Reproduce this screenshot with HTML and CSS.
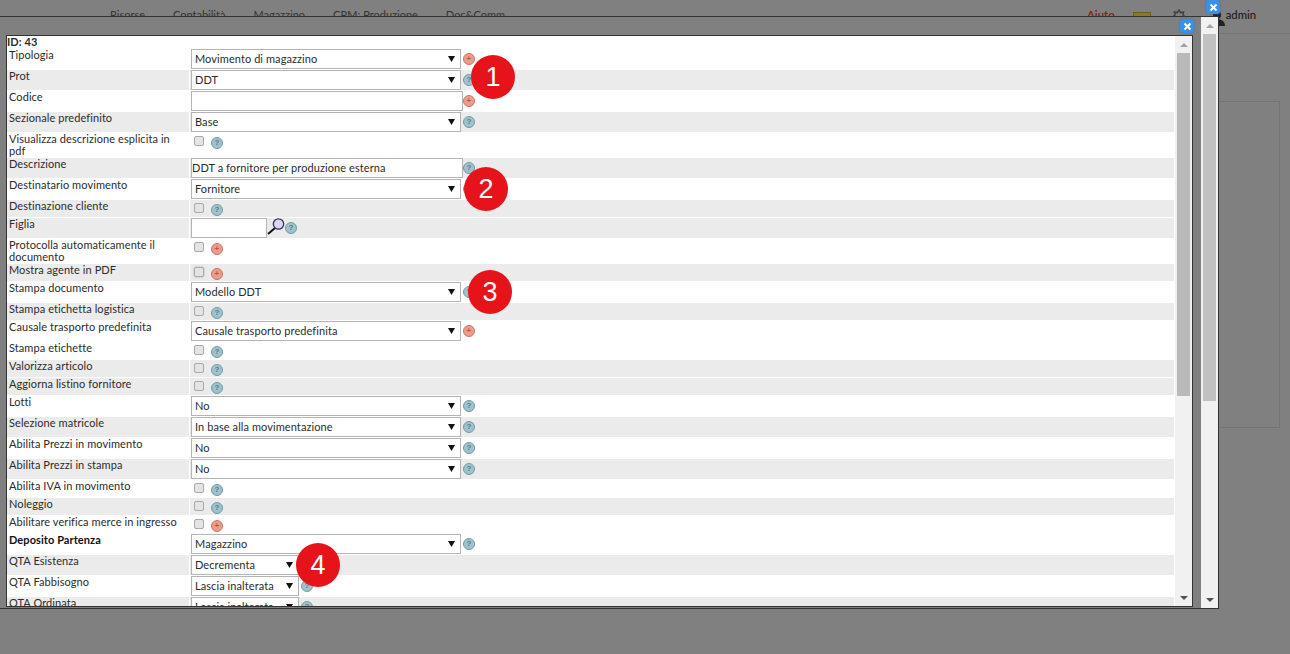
FILE: index.html
```html
<!DOCTYPE html>
<html>
<head>
	<title>Tipologia documento</title>
	<meta charset="UTF-8">
	<link rel="stylesheet" href="styles.css">
</head>
<body>
	<div class="topbar">
		<nav class="nav">
			<a>Risorse</a>
			<a>Contabilità</a>
			<a>Magazzino</a>
			<a>CRM; Produzione</a>
			<a>Doc&amp;Comm</a>
		</nav>
		<div class="tools">
			<a class="help-link">Aiuto</a>
			<span class="mail"></span>
			<svg class="gear" width="16" height="16" viewBox="0 0 16 16"><path d="M8 1l1.600 2.600 3-.7-.7 3L14.500 8l-2.600 2 .7 3-3-.7L8 15l-1.600-2.700-3 .7.7-3L1.500 8l2.600-2.100-.7-3 3 .7z" fill="none" stroke="#444" stroke-width="1.500"/></svg>
			<svg class="user" width="15" height="16" viewBox="0 0 15 16"><circle cx="7" cy="5" r="4" fill="#222"/><path d="M0 16c0-5 3-7 7-7s8 2 8 7z" fill="#222"/></svg>
			<span class="admin">admin</span>
		</div>
	</div>
	<div class="panel"></div>

	<div class="win-outer">
		<span class="close close-outer"><svg width="9" height="9" viewBox="0 0 9 9"><path d="M1.500 1.500l6 6M7.500 1.500l-6 6" stroke="#fff" stroke-width="2"/></svg></span>
		<div class="sbar">
			<span class="sbar-btn"><i class="arrow-up"></i></span>
			<span class="sbar-thumb thumb-outer"></span>
			<span class="sbar-rest"></span>
			<span class="sbar-btn"><i class="arrow-down"></i></span>
		</div>

		<div class="win-inner">
			<div class="form">
				<div class="id-line">ID: 43</div>

				<div class="row">
					<label>Tipologia</label>
					<div class="field"><select class="sel"><option>Movimento di magazzino</option></select><span class="mark plus">+</span></div>
				</div>
				<div class="row alt">
					<label>Prot</label>
					<div class="field"><select class="sel"><option>DDT</option></select><span class="mark tip">?</span></div>
				</div>
				<div class="row">
					<label>Codice</label>
					<div class="field"><input class="txt" type="text"><span class="mark plus">+</span></div>
				</div>
				<div class="row alt">
					<label>Sezionale predefinito</label>
					<div class="field"><select class="sel"><option>Base</option></select><span class="mark tip">?</span></div>
				</div>
				<div class="row row-two">
					<label>Visualizza descrizione esplicita in pdf</label>
					<div class="field check"><input type="checkbox"><span class="mark tip">?</span></div>
				</div>
				<div class="row alt">
					<label>Descrizione</label>
					<div class="field"><input class="txt" type="text" value="DDT a fornitore per produzione esterna"><span class="mark tip">?</span></div>
				</div>
				<div class="row">
					<label>Destinatario movimento</label>
					<div class="field"><select class="sel"><option>Fornitore</option></select><span class="mark tip">?</span></div>
				</div>
				<div class="row row-chk alt">
					<label>Destinazione cliente</label>
					<div class="field check"><input type="checkbox"><span class="mark tip">?</span></div>
				</div>
				<div class="row alt">
					<label>Figlia</label>
					<div class="field">
						<input class="txt txt-short" type="text">
						<svg class="lens" width="20" height="17" viewBox="0 0 20 17"><path d="M1 16l7-6" stroke="#111" stroke-width="2"/><circle cx="11.500" cy="6" r="5.200" fill="#d9d6ee" stroke="#34345a" stroke-width="1.300"/></svg>
						<span class="mark tip">?</span>
					</div>
				</div>
				<div class="row row-two">
					<label>Protocolla automaticamente il documento</label>
					<div class="field check"><input type="checkbox"><span class="mark plus">+</span></div>
				</div>
				<div class="row row-chk alt">
					<label>Mostra agente in PDF</label>
					<div class="field check"><input class="focused" type="checkbox"><span class="mark plus">+</span></div>
				</div>
				<div class="row">
					<label>Stampa documento</label>
					<div class="field"><select class="sel"><option>Modello DDT</option></select><span class="mark tip">?</span></div>
				</div>
				<div class="row row-chk alt">
					<label>Stampa etichetta logistica</label>
					<div class="field check"><input type="checkbox"><span class="mark tip">?</span></div>
				</div>
				<div class="row">
					<label>Causale trasporto predefinita</label>
					<div class="field"><select class="sel"><option>Causale trasporto predefinita</option></select><span class="mark plus">+</span></div>
				</div>
				<div class="row row-chk">
					<label>Stampa etichette</label>
					<div class="field check"><input type="checkbox"><span class="mark tip">?</span></div>
				</div>
				<div class="row row-chk alt">
					<label>Valorizza articolo</label>
					<div class="field check"><input type="checkbox"><span class="mark tip">?</span></div>
				</div>
				<div class="row row-chk alt">
					<label>Aggiorna listino fornitore</label>
					<div class="field check"><input type="checkbox"><span class="mark tip">?</span></div>
				</div>
				<div class="row">
					<label>Lotti</label>
					<div class="field"><select class="sel"><option>No</option></select><span class="mark tip">?</span></div>
				</div>
				<div class="row alt">
					<label>Selezione matricole</label>
					<div class="field"><select class="sel"><option>In base alla movimentazione</option></select><span class="mark tip">?</span></div>
				</div>
				<div class="row">
					<label>Abilita Prezzi in movimento</label>
					<div class="field"><select class="sel"><option>No</option></select><span class="mark tip">?</span></div>
				</div>
				<div class="row alt">
					<label>Abilita Prezzi in stampa</label>
					<div class="field"><select class="sel"><option>No</option></select><span class="mark tip">?</span></div>
				</div>
				<div class="row row-chk">
					<label>Abilita IVA in movimento</label>
					<div class="field check"><input type="checkbox"><span class="mark tip">?</span></div>
				</div>
				<div class="row row-chk alt">
					<label>Noleggio</label>
					<div class="field check"><input type="checkbox"><span class="mark tip">?</span></div>
				</div>
				<div class="row row-chk">
					<label>Abilitare verifica merce in ingresso</label>
					<div class="field check"><input type="checkbox"><span class="mark plus">+</span></div>
				</div>
				<div class="row">
					<label class="strong">Deposito Partenza</label>
					<div class="field"><select class="sel"><option>Magazzino</option></select><span class="mark tip">?</span></div>
				</div>
				<div class="row alt">
					<label>QTA Esistenza</label>
					<div class="field"><select class="sel sel-short"><option>Decrementa</option></select><span class="mark tip">?</span></div>
				</div>
				<div class="row">
					<label>QTA Fabbisogno</label>
					<div class="field"><select class="sel sel-short"><option>Lascia inalterata</option></select><span class="mark tip">?</span></div>
				</div>
				<div class="row alt">
					<label>QTA Ordinata</label>
					<div class="field"><select class="sel sel-short"><option>Lascia inalterata</option></select><span class="mark tip">?</span></div>
				</div>
			</div>
			<div class="sbar">
				<span class="sbar-btn"><i class="arrow-up"></i></span>
				<span class="sbar-thumb thumb-inner"></span>
				<span class="sbar-rest"></span>
				<span class="sbar-btn"><i class="arrow-down"></i></span>
			</div>
		</div>
		<span class="close close-inner"><svg width="9" height="9" viewBox="0 0 9 9"><path d="M1.500 1.500l6 6M7.500 1.500l-6 6" stroke="#fff" stroke-width="2"/></svg></span>
	</div>

	<span class="badge badge-1">1</span>
	<span class="badge badge-2">2</span>
	<span class="badge badge-3">3</span>
	<span class="badge badge-4">4</span>
</body>
</html>
```

FILE: styles.css
```css
* {
	box-sizing: border-box;
}

html, body {
	margin: 0;
	height: 100%;
}

body {
	height: 654px;
	overflow: hidden;
	background: #808080;
	font-family: "Lato", "Open Sans", sans-serif;
	font-size: 11px;
	color: #2b2b2b;
}

/* page behind the modal */
.topbar {
	display: flex;
	justify-content: space-between;
	height: 34px;
	padding: 7px 34px 0 110px;
	border-bottom: 1px solid #757575;
	color: #333;
}

.nav {
	display: flex;
	gap: 28px;
	line-height: 15px;
}

.tools {
	display: flex;
	align-items: flex-start;
	font-size: 11.3px;
	line-height: 15px;
}

.help-link {
	font-weight: bold;
	color: #8a1f1f;
	margin-right: 18px;
}

.mail {
	width: 18px;
	height: 7px;
	margin: 5px 20px 0 0;
	background: #8d7a1f;
	border: 1px solid #6b5f1c;
}

.gear {
	margin: 2px 23px 0 0;
}

.user {
	margin: 3px 1px 0 0;
}

.admin {
	color: #111;
}

.panel {
	height: 327px;
	margin: 67px 10px 0;
	border: 1px solid #747474;
}

/* modal windows */
.win-outer {
	position: absolute;
	left: -1px;
	top: 16px;
	width: 1220px;
	height: 593px;
	display: flex;
	justify-content: flex-end;
	background: #808080;
	border: 1px solid #333;
}

.win-inner {
	position: absolute;
	left: 6px;
	top: 18px;
	width: 1187px;
	height: 572px;
	display: flex;
	justify-content: space-between;
	background: #fff;
	border: 1px solid #333;
}

.sbar {
	width: 17px;
	height: 100%;
	flex: none;
	display: flex;
	flex-direction: column;
	background: #f1f1f1;
}

.sbar-btn {
	height: 17px;
	flex: none;
	display: flex;
	align-items: center;
	justify-content: center;
}

.sbar-thumb {
	flex: none;
	margin: 0 2px;
}

.thumb-outer {
	height: 367px;
	background: #c1c1c1;
}

.thumb-inner {
	height: 343px;
	background: #b9b9b9;
}

.sbar-rest {
	flex: 1;
}

.arrow-up,
.arrow-down {
	width: 0;
	height: 0;
	border-left: 4px solid transparent;
	border-right: 4px solid transparent;
}

.arrow-up {
	border-bottom: 4px solid #a3a3a3;
}

.arrow-down {
	border-top: 4px solid #505050;
}

.close {
	position: absolute;
	width: 14px;
	height: 14px;
	display: flex;
	align-items: center;
	justify-content: center;
	background: #3c8fe6;
	border-radius: 3px;
	box-shadow: 0 0 2px #2a6fc0;
}

.close-outer {
	left: 1206px;
	top: -17px;
}

.close-inner {
	left: 1180px;
	top: 2px;
}

/* form */
.form {
	flex: 1;
	min-width: 0;
	overflow: hidden;
	letter-spacing: 0.08px;
}

.id-line {
	height: 13px;
	line-height: 12px;
	font-weight: bold;
}

.row {
	display: grid;
	grid-template-columns: 182px 984px;
	column-gap: 1px;
	height: 21px;
	padding-bottom: 1px;
}

.row-chk {
	height: 18px;
}

.row-two {
	height: 25px;
}

.row label {
	padding: 0 10px 0 2px;
	line-height: 12px;
}

.row label.strong {
	font-weight: bold;
	color: #111;
}

.alt label,
.alt .field {
	background: #ebebeb;
}

.field {
	display: flex;
	align-items: center;
	padding-left: 1px;
}

.check {
	align-items: flex-start;
	padding: 3px 0 0 4px;
}

.check input {
	appearance: none;
	width: 10px;
	height: 10px;
	margin: 0 7px 0 0;
	background: #e4e4e4;
	border: 1px solid #a9a9a9;
	border-radius: 2px;
}

.check input.focused {
	box-shadow: 0 0 2px #8fa6cf;
}

.check .mark {
	margin-top: 1px;
}

.sel,
.txt {
	height: 20px;
	font-family: inherit;
	font-size: 11px;
	letter-spacing: inherit;
	color: #2b2b2b;
	background-color: #fff;
	border: 1px solid #b4b4b4;
	border-radius: 0;
	outline: none;
}

.sel {
	appearance: none;
	width: 270px;
	margin-right: 2px;
	padding: 0 0 1px 3px;
	background-image: url("data:image/svg+xml,%3Csvg xmlns='http://www.w3.org/2000/svg' width='7' height='6'%3E%3Cpath d='M0 0h7L3.500 6z' fill='%23111'/%3E%3C/svg%3E");
	background-repeat: no-repeat;
	background-position: right 5px center;
}

.sel-short {
	width: 108px;
}

.txt {
	width: 272px;
	padding: 0 0 1px;
}

.txt-short {
	width: 76px;
}

.lens {
	flex: none;
	margin: 0 -2px 3px 0;
}

.mark {
	width: 12px;
	height: 12px;
	flex: none;
	display: flex;
	align-items: center;
	justify-content: center;
	border-radius: 50%;
	font-family: "Liberation Sans", sans-serif;
	font-size: 8px;
	font-weight: bold;
	line-height: 1;
}

.tip {
	background: #a3c1ca;
	border: 1px solid #6f9cab;
	color: #4d7d8f;
}

.plus {
	background: #eb9d8d;
	border: 1px solid #cb7363;
	color: #bf5645;
}

/* numbered callouts */
.badge {
	position: absolute;
	width: 44px;
	height: 44px;
	display: flex;
	align-items: center;
	justify-content: center;
	background: #e7131a;
	border-radius: 50%;
	font-family: "Liberation Sans", sans-serif;
	font-size: 27px;
	color: #fff;
}

.badge-1 {
	left: 471px;
	top: 55px;
}

.badge-2 {
	left: 464px;
	top: 167px;
}

.badge-3 {
	left: 468px;
	top: 270px;
}

.badge-4 {
	left: 296px;
	top: 543px;
}
```
